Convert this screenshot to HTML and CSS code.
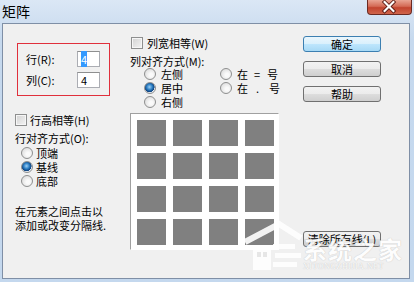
FILE: index.html
```html
<!DOCTYPE html>
<html lang="zh-CN">

<head>
    <meta charset="UTF-8">
    <title>矩阵</title>
    <link rel="stylesheet" href="styles.css">
</head>

<body>
    <div class="window">
        <div class="titlebar">
            <span class="title">矩阵</span>
            <span class="close">
                <svg width="45" height="15" viewBox="0 0 45 15">
                    <path d="M18 3 L27 12 M27 3 L18 12" stroke="#5a1a14" stroke-width="4" stroke-linecap="square" />
                    <path d="M18 3 L27 12 M27 3 L18 12" stroke="#fff" stroke-width="2.2" stroke-linecap="square" />
                </svg>
            </span>
        </div>

        <div class="client">
            <!-- left column: size + row options -->
            <div class="col-left">
                <div class="size-box">
                    <div class="field">
                        <span class="label">行(R):</span>
                        <span class="textbox"><span class="selected">4</span></span>
                    </div>
                    <div class="field">
                        <span class="label">列(C):</span>
                        <span class="textbox">4</span>
                    </div>
                </div>
                <div class="check-row"><span class="checkbox"></span>行高相等(H)</div>
                <div class="caption">行对齐方式(O):</div>
                <div class="radio-list">
                    <div class="radio-row"><span class="radio"></span>顶端</div>
                    <div class="radio-row"><span class="radio checked"></span>基线</div>
                    <div class="radio-row"><span class="radio"></span>底部</div>
                </div>
                <div class="hint">
                    <span class="hint-line">在元素之间点击以</span>
                    <span class="hint-line">添加或改变分隔线.</span>
                </div>
            </div>

            <!-- middle column: column options + preview -->
            <div class="col-mid">
                <div class="check-row wide"><span class="checkbox"></span>列宽相等(W)</div>
                <div class="caption">列对齐方式(M):</div>
                <div class="radio-grid">
                    <div class="radio-row"><span class="radio"></span>左侧</div>
                    <div class="radio-row"><span class="radio"></span>在<span class="sym">=</span>号</div>
                    <div class="radio-row"><span class="radio checked"></span>居中</div>
                    <div class="radio-row"><span class="radio"></span>在<span class="sym dot">.</span>号</div>
                    <div class="radio-row"><span class="radio"></span>右侧</div>
                </div>
                <div class="matrix">
                    <span class="cell"></span><span class="cell"></span><span class="cell"></span><span class="cell"></span>
                    <span class="cell"></span><span class="cell"></span><span class="cell"></span><span class="cell"></span>
                    <span class="cell"></span><span class="cell"></span><span class="cell"></span><span class="cell"></span>
                    <span class="cell"></span><span class="cell"></span><span class="cell"></span><span class="cell"></span>
                </div>
            </div>

            <!-- right column: buttons -->
            <div class="col-right">
                <button class="btn default">确定</button>
                <button class="btn">取消</button>
                <button class="btn">帮助</button>
                <button class="btn clear">清除所有线(L)</button>
            </div>

            <!-- site watermark over the corner -->
            <div class="watermark">
                <svg class="logo" width="66" height="64" viewBox="0 0 66 64">
                    <path d="M6 32 L40 14 L62 28" fill="none" stroke="#fff" stroke-width="6" stroke-linejoin="miter" />
                    <rect x="14" y="36" width="18" height="24" fill="#fff" />
                    <rect x="18" y="42" width="4" height="5" fill="#e6e6e6" />
                    <rect x="24" y="42" width="4" height="5" fill="#e6e6e6" />
                    <rect x="34" y="34" width="22" height="5" fill="#fff" />
                    <rect x="36" y="43" width="26" height="5" fill="#fff" />
                    <rect x="34" y="52" width="24" height="5" fill="#fff" />
                </svg>
                <div class="wm-text">
                    <span class="wm-name">系统之家</span>
                    <span class="wm-url">XITONGZHIJIA.NET</span>
                </div>
            </div>
        </div>
    </div>
</body>

</html>
```

FILE: styles.css
```css
* {
    margin: 0;
    padding: 0;
    box-sizing: border-box;
}

body {
    background-color: #c9dbef;
    font-family: "Noto Sans CJK SC", "Liberation Sans", sans-serif;
    font-size: 11px;
    color: #000;
}

.window {
    width: 414px;
    height: 282px;
    background: linear-gradient(to bottom, #dbe7f5, #c6d9ee 40px, #c4d8ee);
}

/* title bar */
.titlebar {
    height: 23px;
    display: flex;
    justify-content: space-between;
    align-items: flex-start;
}

.title {
    padding-left: 2px;
    font-size: 14px;
    line-height: 22px;
}

.close {
    width: 45px;
    height: 15px;
    margin-right: 2px;
    border: 1px solid #6b2a22;
    border-top: none;
    border-radius: 0 0 4px 4px;
    background: linear-gradient(to bottom, #e9a493, #d46a55 45%, #c2432e 55%, #d0664c);
    display: flex;
}

.close svg {
    margin: -1px 0 0 -1px;
}

/* client area */
.client {
    position: relative;
    width: 408px;
    height: 256px;
    margin-left: 2px;
    border: 1px solid #7f8fa6;
    background-color: #f0f0f0;
    display: flex;
    overflow: hidden;
}

.col-left {
    width: 115px;
    margin-left: 12px;
    padding-top: 19px;
}

.col-mid {
    width: 150px;
    padding-top: 12px;
}

.col-right {
    width: 78px;
    margin-left: 23px;
    padding-top: 12px;
    display: flex;
    flex-direction: column;
}

/* size box */
.size-box {
    width: 93px;
    margin-left: 2px;
    padding: 7px 0;
    border: 1px solid #e0303c;
}

.field {
    display: flex;
    align-items: center;
    height: 16px;
}

.field + .field {
    margin-top: 5px;
}

.label {
    width: 59px;
    padding-left: 8px;
}

.textbox {
    width: 23px;
    height: 16px;
    padding-left: 3px;
    border: 1px solid #abadb3;
    border-top-color: #8e8f8f;
    background-color: #fff;
    line-height: 14px;
}

.selected {
    background-color: #3399ff;
    color: #fff;
}

/* checkboxes and radios */
.check-row {
    display: flex;
    align-items: center;
    height: 14px;
    margin-top: 17px;
}

.check-row.wide {
    margin-top: 0;
    padding-left: 1px;
}

.checkbox {
    width: 12px;
    height: 12px;
    margin-right: 3px;
    border: 1px solid #8e8f8f;
    background: linear-gradient(135deg, #d2d2d2, #f4f4f4);
    box-shadow: inset 0 0 0 1px #f6f6f6;
}

.check-row.wide .checkbox {
    margin-right: 4px;
}

.caption {
    height: 14px;
    line-height: 14px;
    margin-top: 4px;
}

.radio-list {
    margin-top: 1px;
    padding-left: 6px;
}

.radio-row {
    display: flex;
    align-items: center;
    height: 14px;
    white-space: nowrap;
}

.radio {
    width: 12px;
    height: 12px;
    margin-right: 3px;
    border: 1px solid #8e8f8f;
    border-radius: 50%;
    background: radial-gradient(circle at 60% 60%, #fafafa 20%, #d8d8d8 90%);
}

.radio.checked {
    background: radial-gradient(circle at 45% 40%, #9fd0f5 0, #2c7fc4 35%, #0c3f7c 60%, #dfe6ee 64%, #f5f5f5 90%);
}

.radio-grid {
    display: grid;
    grid-template-columns: 76px auto;
    margin-top: -1px;
    padding-left: 14px;
}

.radio-grid .radio {
    margin-right: 5px;
}

.sym {
    margin: 0 7px 0 6px;
}

.sym.dot {
    margin: 0 10px 0 8px;
}

.hint {
    margin-top: 16px;
    display: flex;
    flex-direction: column;
}

.hint-line {
    height: 14px;
    line-height: 14px;
}

/* matrix preview */
.matrix {
    width: 149px;
    height: 137px;
    margin-top: 4px;
    padding: 6px 4px 4px 6px;
    border: 1px solid #fff;
    border-top-color: #a0a0a0;
    border-left-color: #a0a0a0;
    background-color: #fff;
    display: grid;
    grid-template-columns: repeat(4, 29px);
    grid-auto-rows: 26px;
    gap: 7px;
}

.cell {
    background-color: #808080;
}

/* buttons */
.btn {
    height: 16px;
    margin-bottom: 9px;
    border: 1px solid #707070;
    border-radius: 3px;
    background: linear-gradient(to bottom, #f2f2f2, #ebebeb 50%, #dddddd 51%, #cfcfcf);
    font-family: inherit;
    font-size: 11px;
    line-height: 14px;
    color: #000;
}

.btn.default {
    border-color: #3c7fb1;
    background: linear-gradient(to bottom, #eaf6fd, #d9f0fc 50%, #bee6fd 51%, #a7d9f5);
}

.btn.clear {
    margin-top: 120px;
}

/* watermark */
.watermark {
    position: absolute;
    left: 236px;
    top: 186px;
    display: flex;
    align-items: flex-start;
    opacity: 0.9;
    pointer-events: none;
}

.wm-text {
    display: flex;
    flex-direction: column;
    margin: 27px 0 0 -2px;
}

.wm-name {
    font-size: 24px;
    font-weight: bold;
    line-height: 24px;
    letter-spacing: 1px;
    color: #fff;
    text-shadow: 0 0 1px rgba(0, 0, 0, 0.25);
}

.wm-url {
    margin-top: 1px;
    font-family: "Liberation Serif", serif;
    font-size: 8px;
    line-height: 9px;
    letter-spacing: 0.5px;
    color: #fff;
    text-shadow: 0 0 1px rgba(0, 0, 0, 0.3);
}
```
